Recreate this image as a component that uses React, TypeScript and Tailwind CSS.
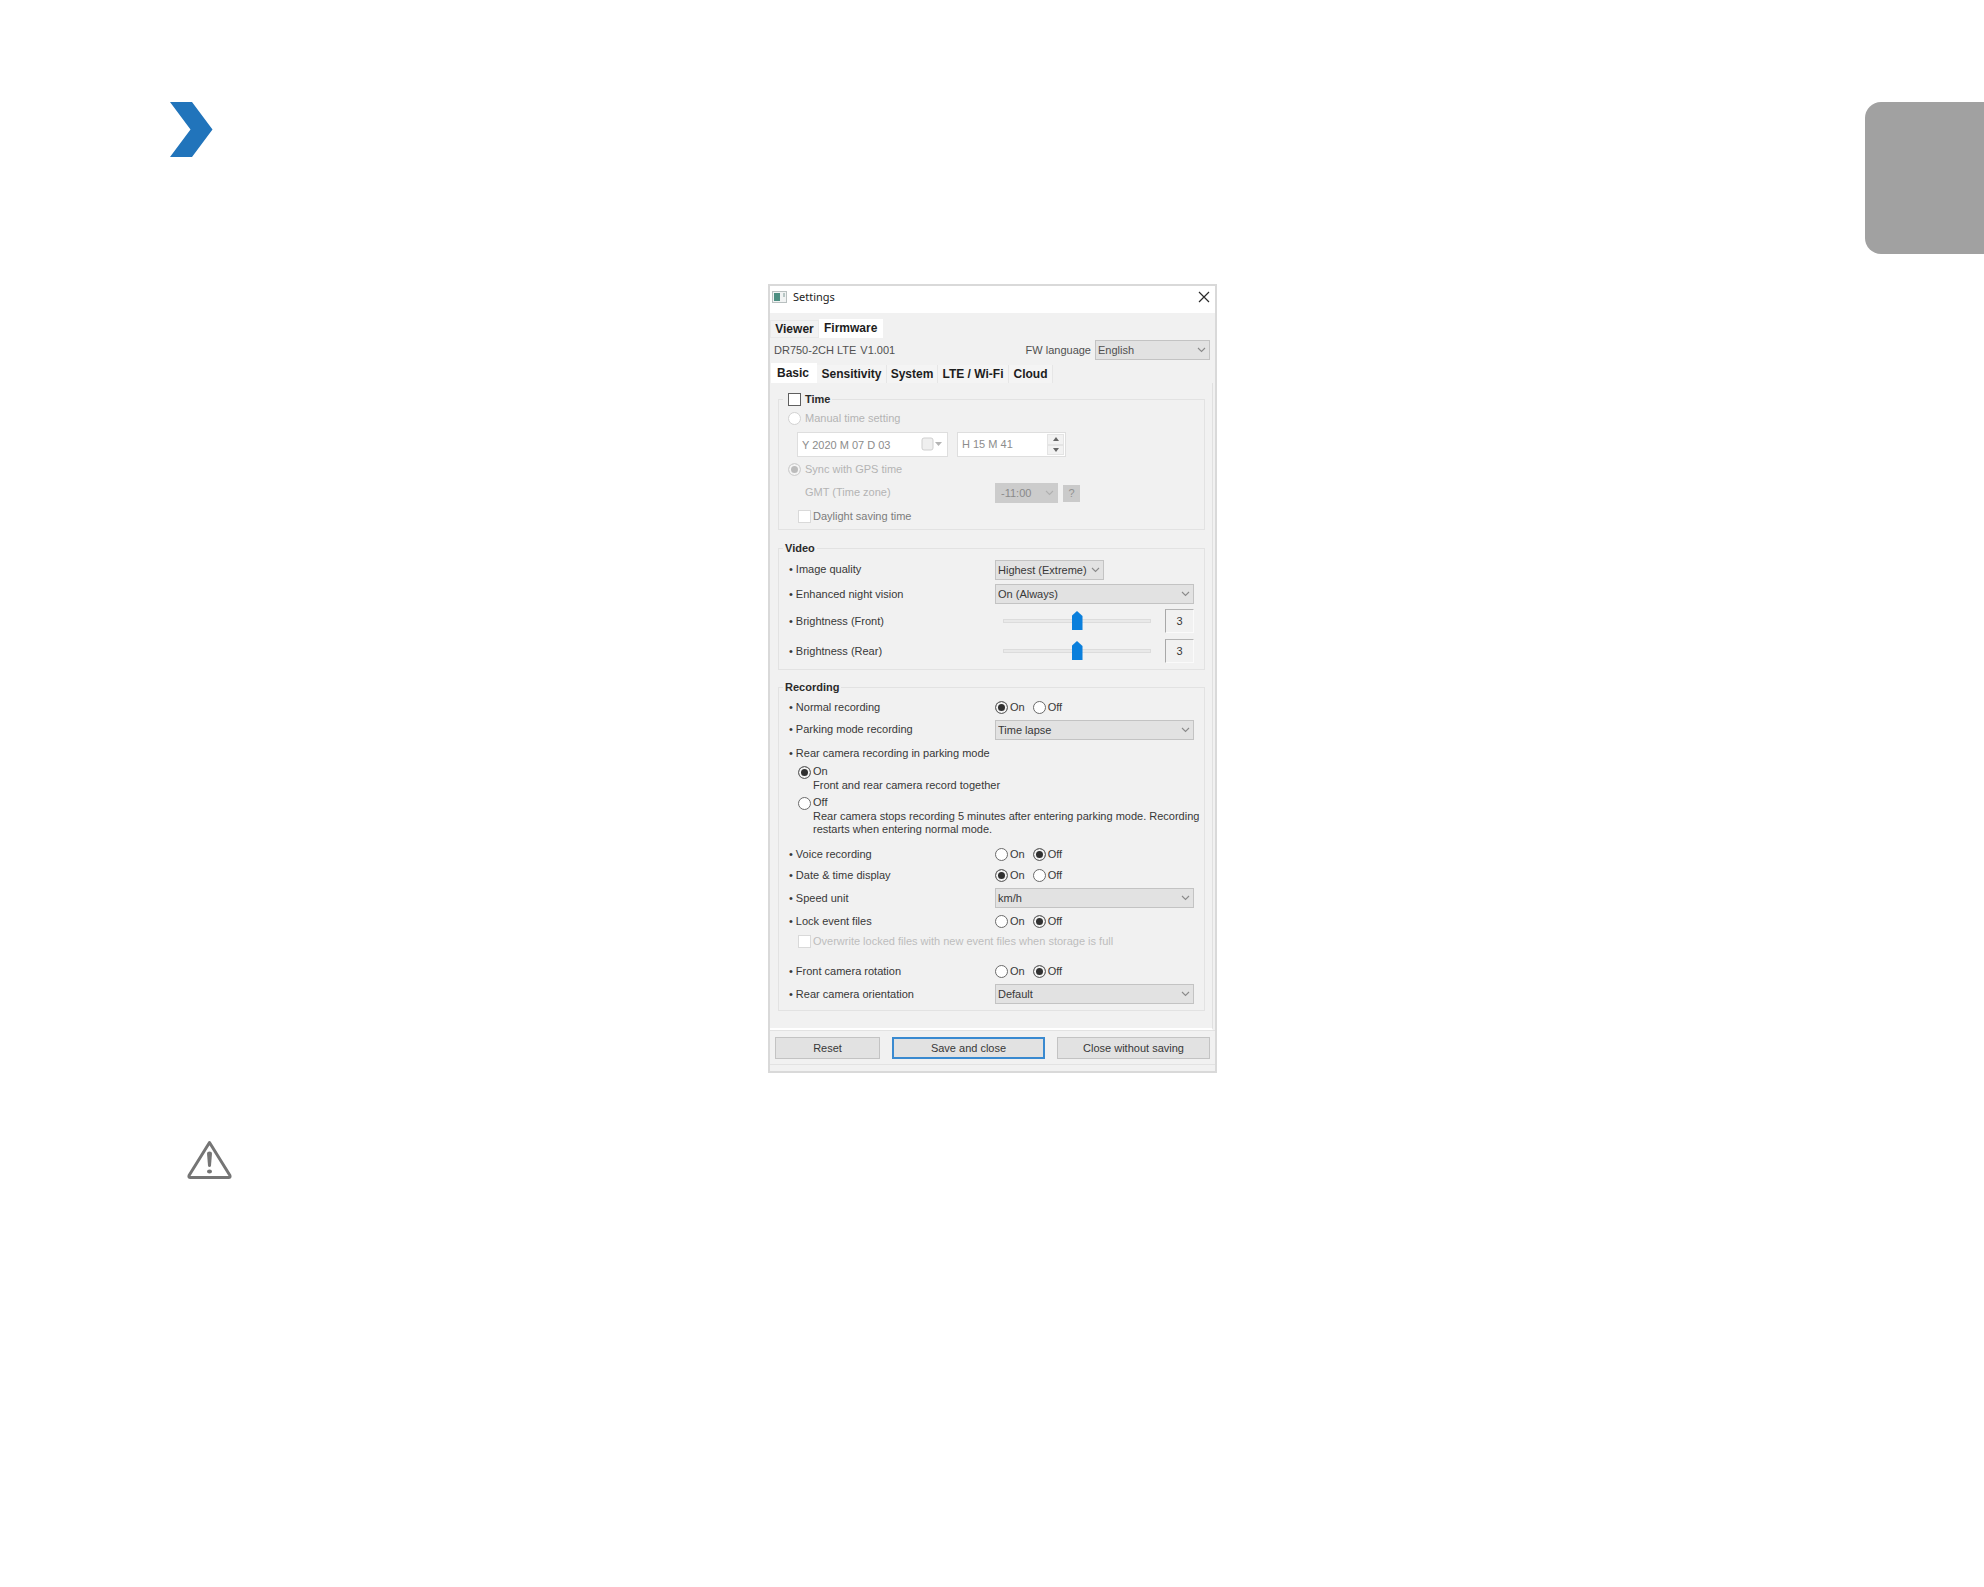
import React, { useState } from "react";

function Caret({ faint = false }: { faint?: boolean }) {
  return (
    <svg
      className={
        "pointer-events-none absolute top-1/2 right-1 -translate-y-1/2 " +
        (faint ? "text-[#b0b0b0]" : "text-[#8a8a8a]")
      }
      width="9"
      height="6"
      viewBox="0 0 9 6"
      fill="none"
      stroke="currentColor"
      strokeWidth="1.1"
      aria-hidden="true"
    >
      <path d="M1 1l3.5 3.5L8 1" />
    </svg>
  );
}

function Dropdown({
  id,
  value,
  className,
}: {
  id: string;
  value: string;
  className: string;
}) {
  return (
    <div className={"relative h-5 " + className}>
      <select
        id={id}
        defaultValue={value}
        className="block h-5 w-full appearance-none border border-[#c3c3c3] bg-[#e2e2e2] pr-3 pl-[2px] leading-4 outline-none"
      >
        <option>{value}</option>
      </select>
      <Caret />
    </div>
  );
}

const radioClass =
  "m-0 size-[13px] shrink-0 appearance-none rounded-full border border-[#6a6a6a] bg-white checked:bg-[#303030] checked:shadow-[inset_0_0_0_2px_#f4f4f4] disabled:border-[#d2d2d2] disabled:checked:bg-[#bcbcbc]";

function OnOff({ name, on }: { name: string; on: boolean }) {
  return (
    <div className="flex items-center gap-2" role="radiogroup" aria-label={name}>
      <label className="flex items-center gap-[2px]">
        <input type="radio" name={name} defaultChecked={on} className={radioClass} />
        On
      </label>
      <label className="flex items-center gap-[2px]">
        <input type="radio" name={name} defaultChecked={!on} className={radioClass} />
        Off
      </label>
    </div>
  );
}

function Row({
  label,
  htmlFor,
  className,
  children,
}: {
  label: string;
  htmlFor?: string;
  className: string;
  children?: React.ReactNode;
}) {
  const text = (
    <>
      <span className="mr-[3px]">•</span>
      {label}
    </>
  );
  return (
    <div className={"flex items-center pr-[10px] pl-[10px] " + className}>
      <div className={children ? "w-[206px] shrink-0" : ""}>
        {htmlFor ? <label htmlFor={htmlFor}>{text}</label> : <span>{text}</span>}
      </div>
      {children}
    </div>
  );
}

function Brightness({ id, label }: { id: string; label: string }) {
  const [value, setValue] = useState(3);
  return (
    <Row label={label} htmlFor={id} className="h-[30px]">
      <div className="flex grow items-center pl-2">
        <input
          id={id}
          type="range"
          min={1}
          max={5}
          value={value}
          onChange={(e) => setValue(Number(e.target.value))}
          className="m-0 h-5 w-[148px] appearance-none bg-transparent [&::-webkit-slider-runnable-track]:h-1 [&::-webkit-slider-runnable-track]:border [&::-webkit-slider-runnable-track]:border-[#dcdcdc] [&::-webkit-slider-runnable-track]:bg-[#e9e9e9] [&::-webkit-slider-thumb]:-mt-[9px] [&::-webkit-slider-thumb]:h-[19px] [&::-webkit-slider-thumb]:w-[11px] [&::-webkit-slider-thumb]:appearance-none [&::-webkit-slider-thumb]:bg-[#0a7fdc] [&::-webkit-slider-thumb]:[clip-path:polygon(50%_0,100%_26%,100%_100%,0_100%,0_26%)]"
        />
        <output
          htmlFor={id}
          className="ml-auto flex h-6 w-[29px] items-center justify-center border border-t-[#b4b4b4] border-r-[#fafafa] border-b-[#fafafa] border-l-[#a8a8a8]"
        >
          {value}
        </output>
      </div>
    </Row>
  );
}

const legendClass = "ml-1 h-[14px] px-[2px] leading-[14px] font-bold text-[#2b2b2b]";
const groupClass = "min-w-0 border border-[#e2e2e2]";

function TimeGroup() {
  return (
    <fieldset className={groupClass + " text-[#b4b4b4]"}>
      <legend className={legendClass}>
        <label className="flex items-center gap-1 pl-[3px]">
          <input
            type="checkbox"
            className="m-0 size-[13px] appearance-none border border-[#5f5f5f] bg-white"
          />
          Time
        </label>
      </legend>
      <label className="flex h-[25px] items-center gap-1 pl-[9px]">
        <input type="radio" name="time" disabled className={radioClass} />
        Manual time setting
      </label>
      <div className="flex h-[26px] items-end gap-[9px] pl-[18px] text-[#8c8c8c]">
        <div className="relative h-[25px] w-[151px]">
          <input
            aria-label="Date"
            disabled
            defaultValue="Y 2020 M 07 D 03"
            className="h-full w-full border border-[#dedede] bg-white pl-1"
          />
          <svg
            className="absolute top-[5px] right-[6px]"
            width="21"
            height="14"
            viewBox="0 0 21 14"
            aria-hidden="true"
          >
            <rect x="1" y="1" width="11" height="12" rx="2" fill="#efefef" stroke="#cfcfcf" />
            <path d="M14 5h7l-3.500 4z" fill="#b4b4b4" />
          </svg>
        </div>
        <div className="flex h-[25px] w-[109px] border border-[#dedede] bg-white pr-px">
          <input
            aria-label="Time of day"
            disabled
            defaultValue="H 15 M 41"
            className="w-0 grow bg-transparent pl-1"
          />
          <div className="flex w-[17px] flex-col py-px">
            <button
              aria-label="Later"
              className="flex flex-1 items-center justify-center border border-[#e4e4e4] bg-[#f2f2f2]"
            >
              <svg width="6" height="4" viewBox="0 0 6 4" aria-hidden="true">
                <path d="M0 4l3-4 3 4z" fill="#666" />
              </svg>
            </button>
            <button
              aria-label="Earlier"
              className="flex flex-1 items-center justify-center border border-[#e4e4e4] bg-[#f2f2f2]"
            >
              <svg width="6" height="4" viewBox="0 0 6 4" aria-hidden="true">
                <path d="M0 0l3 4 3-4z" fill="#666" />
              </svg>
            </button>
          </div>
        </div>
      </div>
      <label className="flex h-[25px] items-center gap-1 pl-[9px]">
        <input
          type="radio"
          name="time"
          disabled
          defaultChecked
          className={radioClass}
        />
        Sync with GPS time
      </label>
      <div className="flex h-[21px] items-center pl-[26px]">
        <label htmlFor="gmt" className="w-[190px]">
          GMT (Time zone)
        </label>
        <div className="relative h-5 w-[63px]">
          <select
            id="gmt"
            disabled
            className="block h-5 w-full appearance-none bg-[#cccccc] pl-[6px] leading-5 text-[#8a8a8a] opacity-100"
          >
            <option>-11:00</option>
          </select>
          <Caret faint />
        </div>
        <button
          aria-label="Time zone help"
          className="mt-px ml-[5px] h-[17px] w-[17px] bg-[#cacaca] text-[#929292]"
        >
          ?
        </button>
      </div>
      <label className="flex h-[26px] items-center gap-[2px] pl-[19px] text-[#7c7c7c]">
        <input
          type="checkbox"
          disabled
          className="m-0 size-[13px] appearance-none border border-[#d9d9d9] bg-white"
        />
        Daylight saving time
      </label>
    </fieldset>
  );
}

function VideoGroup() {
  return (
    <fieldset className={groupClass + " mt-[11px] pt-[2px] pb-[3px]"}>
      <legend className={legendClass}>Video</legend>
      <Row label="Image quality" htmlFor="quality" className="h-[25px]">
        <Dropdown id="quality" value="Highest (Extreme)" className="w-[109px]" />
      </Row>
      <Row label="Enhanced night vision" htmlFor="night" className="h-6">
        <Dropdown id="night" value="On (Always)" className="grow" />
      </Row>
      <Brightness id="front-brightness" label="Brightness (Front)" />
      <Brightness id="rear-brightness" label="Brightness (Rear)" />
    </fieldset>
  );
}

function RearOption({
  label,
  checked,
  children,
}: {
  label: string;
  checked: boolean;
  children: React.ReactNode;
}) {
  return (
    <label className="mb-1 grid grid-cols-[13px_1fr] gap-x-[2px] pl-[19px] leading-[13px]">
      <input
        type="radio"
        name="rear-parking"
        defaultChecked={checked}
        className={radioClass + " mt-px"}
      />
      <span className="h-[14px]">{label}</span>
      <span className="col-start-2 sm:whitespace-nowrap">{children}</span>
    </label>
  );
}

function RecordingGroup() {
  return (
    <fieldset className={groupClass + " mt-[10px] pt-[2px] pb-1"}>
      <legend className={legendClass}>Recording</legend>
      <Row label="Normal recording" className="h-[22px]">
        <OnOff name="Normal recording" on />
      </Row>
      <Row label="Parking mode recording" htmlFor="parking" className="h-[23px]">
        <Dropdown id="parking" value="Time lapse" className="grow" />
      </Row>
      <Row label="Rear camera recording in parking mode" className="h-6" />
      <RearOption label="On" checked>
        Front and rear camera record together
      </RearOption>
      <RearOption label="Off" checked={false}>
        Rear camera stops recording 5 minutes after entering parking mode. Recording
        <br />
        restarts when entering normal mode.
      </RearOption>
      <Row label="Voice recording" className="mt-[7px] h-[22px]">
        <OnOff name="Voice recording" on={false} />
      </Row>
      <Row label="Date &amp; time display" className="h-[21px]">
        <OnOff name="Date and time display" on />
      </Row>
      <Row label="Speed unit" htmlFor="speed" className="h-6">
        <Dropdown id="speed" value="km/h" className="grow" />
      </Row>
      <Row label="Lock event files" className="h-[22px]">
        <OnOff name="Lock event files" on={false} />
      </Row>
      <label className="flex h-[18px] items-center gap-[2px] pl-[19px] text-[#bdbdbd]">
        <input
          type="checkbox"
          disabled
          className="m-0 size-[13px] appearance-none border border-[#d9d9d9] bg-white"
        />
        Overwrite locked files with new event files when storage is full
      </label>
      <Row label="Front camera rotation" className="mt-[10px] h-[22px]">
        <OnOff name="Front camera rotation" on={false} />
      </Row>
      <Row label="Rear camera orientation" htmlFor="orientation" className="h-6">
        <Dropdown id="orientation" value="Default" className="grow" />
      </Row>
    </fieldset>
  );
}

function SettingsDialog() {
  return (
    <section
      aria-label="Settings"
      className="mx-auto w-full max-w-[449px] border-2 border-[#d9d9d9] bg-[#f1f1f1] text-[11px] text-[#383838]"
    >
      <header className="flex h-[27px] items-center bg-white pr-[5px] pb-[5px] pl-[2px]">
        <svg width="15" height="12" viewBox="0 0 15 12" aria-hidden="true">
          <rect x="0.500" y="0.500" width="14" height="11" fill="#f1f3f3" stroke="#b9c0c0" />
          <rect x="2" y="2" width="6" height="8" fill="#4d8f82" />
          <path d="M12 2v4" stroke="#7f9a96" />
        </svg>
        <h1 className="ml-[6px] font-['Noto_Sans'] text-[11px] text-[#1c1c1c]">Settings</h1>
        <button aria-label="Close" className="ml-auto">
          <svg
            width="12"
            height="12"
            viewBox="0 0 12 12"
            fill="none"
            stroke="#2a2a2a"
            strokeWidth="1.2"
            aria-hidden="true"
          >
            <path d="M1 1l10 10M11 1L1 11" />
          </svg>
        </button>
      </header>

      <nav className="flex h-[25px] items-end text-xs font-bold text-[#1d1d1d]">
        <button className="h-[18px] w-[49px] border border-[#e9e9e9] bg-[#f2f2f2] text-center leading-4">
          Viewer
        </button>
        <button className="h-[19px] w-16 bg-white pl-[5px] text-left leading-[17px]">
          Firmware
        </button>
      </nav>

      <div className="flex h-6 items-center pr-[5px] pl-1 text-[#505050]">
        <span>DR750-2CH LTE</span>
        <span className="ml-1">V1.001</span>
        <label htmlFor="language" className="mr-1 ml-auto">
          FW language
        </label>
        <Dropdown id="language" value="English" className="w-[115px]" />
      </div>

      <nav className="flex h-[21px] items-end text-xs font-bold text-[#1d1d1d]">
        <button className="ml-px h-5 w-[46px] bg-white pl-[6px] text-left leading-[19px]">
          Basic
        </button>
        <button className="h-[18px] w-[70px] border-r border-[#e6e6e6] bg-[#f4f4f4]">
          Sensitivity
        </button>
        <button className="h-[18px] w-[51px] border-r border-[#e6e6e6] bg-[#f4f4f4]">
          System
        </button>
        <button className="h-[18px] w-[71px] border-r border-[#e6e6e6] bg-[#f4f4f4]">
          LTE / Wi-Fi
        </button>
        <button className="h-[18px] w-[44px] border-r border-[#e6e6e6] bg-[#f4f4f4]">
          Cloud
        </button>
      </nav>

      <div className="mr-[2px] border-r border-b-2 border-r-[#e0e0e0] border-b-white pt-[9px] pr-[7px] pb-[17px] pl-2">
        <TimeGroup />
        <VideoGroup />
        <RecordingGroup />
      </div>

      <footer className="mb-[6px] flex justify-between border-y border-[#e2e2e2] px-[5px] pt-[6px] pb-[5px]">
        <button className="h-[22px] w-[105px] border border-[#c3c3c3] bg-[#e2e2e2]">
          Reset
        </button>
        <button className="h-[22px] w-[153px] border-2 border-[#3a8ad0] bg-[#e2e2e2]">
          Save and close
        </button>
        <button className="h-[22px] w-[153px] border border-[#c3c3c3] bg-[#e2e2e2]">
          Close without saving
        </button>
      </footer>
    </section>
  );
}

export default function App() {
  return (
    <main className="min-h-screen bg-white pt-[102px] font-['Liberation_Sans',Arial,sans-serif]">
      <div className="flex items-start justify-between pl-[170px]">
        <svg width="43" height="55" viewBox="0 0 43 55" aria-hidden="true">
          <path d="M0 0h22l20.500 27.500L22 55H0l20.500-27.500z" fill="#2174bb" />
        </svg>
        <div className="h-[152px] w-[119px] rounded-l-2xl bg-[#a1a1a1]" />
      </div>
      <div className="mt-[30px] pl-px">
        <SettingsDialog />
      </div>
      <div className="mt-[67px] pl-[187px]">
        <svg width="46" height="40" viewBox="0 0 46 40" aria-hidden="true">
          <path
            d="M22.500 2.500L2.200 35.200Q1.200 37.500 3.500 37.500H41.500Q43.800 37.500 42.800 35.200Z"
            fill="none"
            stroke="#757575"
            strokeWidth="3"
            strokeLinejoin="round"
          />
          <path
            d="M20 13.500Q20 11.500 22.500 11.500T25 13.500L24 25.500Q23.800 27 22.500 27T21 25.500Z"
            fill="#757575"
          />
          <ellipse cx="22.500" cy="31.500" rx="2.500" ry="2" fill="#757575" />
        </svg>
      </div>
    </main>
  );
}
